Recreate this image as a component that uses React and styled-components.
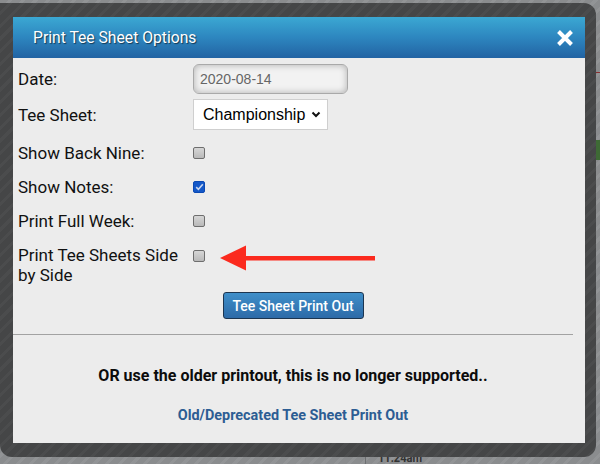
import React from 'react'
import styled, { createGlobalStyle } from 'styled-components'

const GlobalStyle = createGlobalStyle`
  html, body {
    margin: 0;
    padding: 0;
    background: #8c8e90;
    font-family: Roboto, "Liberation Sans", sans-serif;
  }
`;

const Page = styled.div`
  position: relative;
  width: 600px;
  height: 464px;
  overflow: hidden;
  background: repeating-linear-gradient(
    135deg,
    #8a8c8e 0px,
    #8a8c8e 6px,
    #929496 6px,
    #929496 9px
  );
`;

const Backdrop = styled.div`
  position: absolute;
  inset: 0;
`;

const BackLine = styled.div`
  position: absolute;
  left: ${p => p.$left}px;
  top: ${p => p.$top}px;
  width: ${p => p.$width}px;
  height: ${p => p.$height || 1}px;
  background: ${p => p.$color};
`;

const BackTime = styled.span`
  position: absolute;
  left: 378px;
  top: 452px;
  font-size: 13px;
  line-height: 12px;
  font-weight: 700;
  color: #333;
  display: inline-block;
  transform: scaleX(0.85);
  transform-origin: left center;
`;

const Frame = styled.div`
  position: relative;
  margin-top: 3px;
  width: 596px;
  height: 454px;
  box-sizing: border-box;
  padding: 14px 11px 14px 13px;
  border-radius: 0 12px 12px 12px;
  background: repeating-linear-gradient(
    135deg,
    #454647 0px,
    #454647 6px,
    #4b4c4d 6px,
    #4b4c4d 9px
  );
`;

const Dialog = styled.div`
  position: relative;
  width: 572px;
  height: 426px;
  background: #ececec;
  display: flex;
  flex-direction: column;
`;

const Header = styled.div`
  height: 41px;
  flex-shrink: 0;
  display: flex;
  align-items: center;
  justify-content: space-between;
  padding: 0 11px 0 20px;
  background: linear-gradient(to bottom, #3ba8d3 0%, #2d86bf 50%, #2263a3 100%);
`;

const Title = styled.h1`
  margin: 0;
  font-size: 15.7px;
  font-weight: 400;
  color: #fff;
  text-shadow: 1px 1px 1px rgba(0, 0, 0, 0.55);
`;

const CloseButton = styled.button`
  border: 0;
  padding: 0;
  background: none;
  width: 18px;
  height: 18px;
  display: flex;
  cursor: pointer;
`;

const Body = styled.div`
  width: 560px;
  padding: 6px 0 0 5px;
  box-sizing: border-box;
  display: flex;
  flex-direction: column;
`;

const Row = styled.div`
  display: grid;
  grid-template-columns: 175px 1fr;
  align-items: ${p => (p.$top ? 'start' : 'center')};
  height: ${p => p.$height}px;
  padding: ${p => p.$pad || 0}px 0;
  margin-bottom: ${p => p.$gap || 0}px;
  box-sizing: border-box;
`;

const Label = styled.span`
  font-size: 17px;
  line-height: 20px;
  color: #111;
`;

const DateInput = styled.div`
  width: 155px;
  height: 30px;
  box-sizing: border-box;
  border: 1px solid #a9a9a9;
  border-radius: 6px;
  background: #f2f2f2;
  box-shadow: inset 0 0 7px rgba(0, 0, 0, 0.28);
  padding-left: 6px;
  display: flex;
  align-items: center;
  font-family: "Liberation Sans", Arial, sans-serif;
  font-size: 14px;
  color: #666;
`;

const Select = styled.div`
  width: 135px;
  height: 31px;
  box-sizing: border-box;
  border: 1px solid #cfcfcf;
  background: #fff;
  padding: 0 6px 0 9px;
  display: flex;
  align-items: center;
  justify-content: space-between;
  font-family: "Liberation Sans", Arial, sans-serif;
  font-size: 16px;
  color: #000;
`;

const Check = styled.span`
  width: 12px;
  height: 12px;
  box-sizing: border-box;
  border-radius: 2px;
  border: 1px solid ${p => (p.$on ? '#0b49b3' : '#6e6e6e')};
  background: ${p =>
    p.$on
      ? '#1458c8'
      : 'linear-gradient(to bottom, #d6d6d6, #b9b9b9)'};
  display: flex;
  align-items: center;
  justify-content: center;
  margin-top: ${p => p.$offset || 0}px;
`;

const ButtonWrap = styled.div`
  display: flex;
  justify-content: center;
  margin: 7px 0 15px -5px;
`;

const PrintButton = styled.button`
  width: 141px;
  height: 27px;
  border: 1px solid #1c3550;
  border-radius: 3px;
  background: linear-gradient(to bottom, #3f8fc9 0%, #2d6aa8 100%);
  color: #fff;
  font-family: Roboto, sans-serif;
  font-size: 14px;
  font-weight: 500;
  padding: 0;
  cursor: pointer;
`;

const Divider = styled.hr`
  width: 560px;
  margin: 0;
  border: 0;
  border-top: 1px solid #a2a2a2;
`;

const Legacy = styled.div`
  width: 560px;
  display: flex;
  flex-direction: column;
  align-items: center;
  padding-top: 31px;
`;

const Notice = styled.p`
  margin: 0;
  font-size: 16px;
  font-weight: 700;
  color: #0c0c0c;
`;

const OldLink = styled.a`
  margin-top: 22px;
  font-size: 14.4px;
  font-weight: 700;
  color: #2c5d93;
  text-decoration: none;
`;

const Arrow = styled.svg`
  position: absolute;
  left: 207px;
  top: 227px;
`;

const Chevron = () => (
  <svg width="10" height="7" viewBox="0 0 10 7">
    <path d="M1.5 1.5 L5 5 L8.5 1.5" fill="none" stroke="#111" strokeWidth="2" />
  </svg>
);

const Tick = () => (
  <svg width="9" height="8" viewBox="0 0 9 8">
    <path d="M1.2 4.2 L3.4 6.3 L7.8 1.3" fill="none" stroke="#c9d6ee" strokeWidth="1.6" />
  </svg>
);

const App = () => {
  return (
    <Page>
      <GlobalStyle />
      <Backdrop>
        <BackLine $left={0} $top={41} $width={13} $height={30} $color="#3d4c5a" />
        <BackLine $left={0} $top={70} $width={13} $color="#8a3030" />
        <BackLine $left={585} $top={72} $width={15} $color="#8a3030" />
        <BackLine $left={0} $top={98} $width={13} $height={34} $color="#2f3d4c" />
        <BackLine $left={585} $top={140} $width={15} $height={20} $color="#3e6a35" />
        <BackLine $left={365} $top={457} $width={1} $height={7} $color="#6d6f71" />
        <BackTime>11:24am</BackTime>
      </Backdrop>
      <Frame>
        <Dialog>
          <Header>
            <Title>Print Tee Sheet Options</Title>
            <CloseButton aria-label="Close">
              <svg width="18" height="18" viewBox="0 0 18 18">
                <path d="M2.5 2.5 L15.5 15.5 M15.5 2.5 L2.5 15.5" stroke="#fff" strokeWidth="4" />
              </svg>
            </CloseButton>
          </Header>
          <Body>
            <Row $height={30} $gap={5}>
              <Label>Date:</Label>
              <DateInput>2020-08-14</DateInput>
            </Row>
            <Row $height={31} $gap={6}>
              <Label>Tee Sheet:</Label>
              <Select>
                Championship
                <Chevron />
              </Select>
            </Row>
            <Row $height={34}>
              <Label>Show Back Nine:</Label>
              <Check />
            </Row>
            <Row $height={34}>
              <Label>Show Notes:</Label>
              <Check $on>
                <Tick />
              </Check>
            </Row>
            <Row $height={34}>
              <Label>Print Full Week:</Label>
              <Check />
            </Row>
            <Row $height={47} $pad={7} $top>
              <Label>
                Print Tee Sheets Side
                <br />
                by Side
              </Label>
              <Check $offset={5} />
            </Row>
            <ButtonWrap>
              <PrintButton>Tee Sheet Print Out</PrintButton>
            </ButtonWrap>
          </Body>
          <Divider />
          <Legacy>
            <Notice>OR use the older printout, this is no longer supported..</Notice>
            <OldLink href="#">Old/Deprecated Tee Sheet Print Out</OldLink>
          </Legacy>
          <Arrow width="170" height="30" viewBox="0 0 170 30">
            <path d="M0 14 L26 1.5 L26 26.5 Z" fill="#fb2a1e" />
            <rect x="24" y="12" width="131" height="4.5" fill="#fb2a1e" />
          </Arrow>
        </Dialog>
      </Frame>
    </Page>
  )
}

export default App
